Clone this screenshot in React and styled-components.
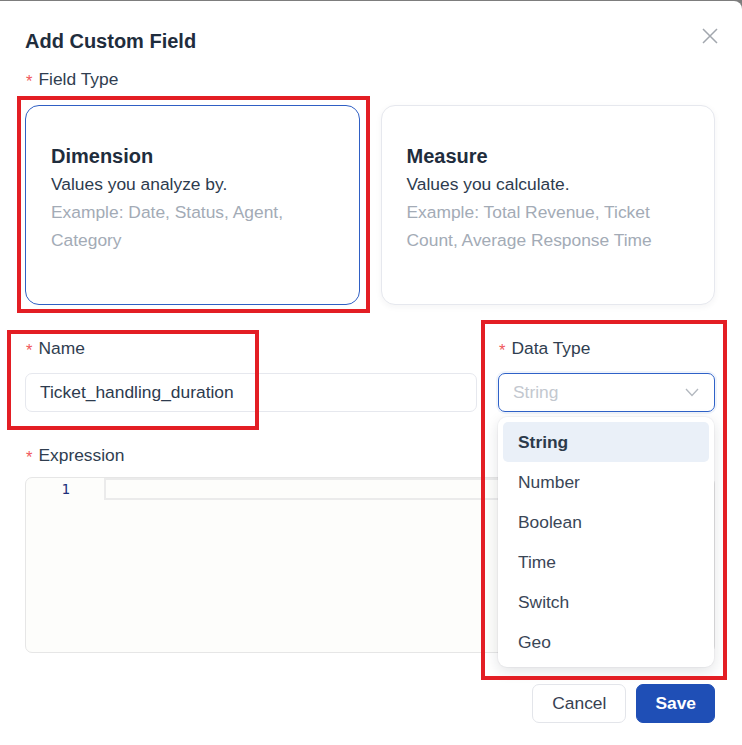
import styled, { createGlobalStyle } from "styled-components";

const GlobalStyle = createGlobalStyle`
  html, body {
    margin: 0;
    padding: 0;
    background: #7d7d7d;
  }
  body {
    font-family: "Liberation Sans", Arial, sans-serif;
    color: #2d3b4e;
  }
`;

const Modal = styled.div`
  position: relative;
  box-sizing: border-box;
  width: 742px;
  height: 744px;
  margin-top: 1px;
  background: #fff;
  border-top-right-radius: 8px;
  padding: 26px 27px 0 25px;
`;

const Header = styled.div`
  display: flex;
  justify-content: space-between;
  align-items: flex-start;
`;

const Title = styled.h2`
  margin: 0;
  font-size: 20px;
  line-height: 28px;
  font-weight: 700;
  color: #1f2d3d;
`;

const CloseButton = styled.button`
  border: 0;
  padding: 0;
  margin: 1px -3px 0 0;
  background: none;
  width: 16px;
  height: 16px;
  display: flex;
  cursor: pointer;
`;

const Label = styled.div`
  display: flex;
  align-items: center;
  height: 24px;
  font-size: 17.4px;
  line-height: 24px;
  color: #303e50;
  margin-top: ${(p) => p.top || 0}px;
  margin-bottom: ${(p) => p.bottom || 13}px;
`;

const Star = styled.span`
  color: #f0585c;
  font-size: 16.5px;
  line-height: 1;
  margin: 4px 6px 0 1px;
`;

const CardGrid = styled.div`
  display: grid;
  grid-template-columns: 1fr 1fr;
  gap: 21px;
`;

const Card = styled.div`
  box-sizing: border-box;
  height: 200px;
  padding: 36px 25px 0 25px;
  border-radius: 14px;
  border: 1px solid ${(p) => (p.selected ? "#2f5fc4" : "#e6e8ee")};
  box-shadow: ${(p) => (p.selected ? "none" : "0 2px 6px rgba(30, 40, 60, 0.05)")};
  background: #fff;
`;

const CardTitle = styled.div`
  font-size: 20px;
  font-weight: 700;
  line-height: 28px;
  color: #1f2d3d;
`;

const CardText = styled.div`
  font-size: 17.4px;
  line-height: 28px;
  color: ${(p) => (p.muted ? "#a3abb6" : "#2d3b4e")};
`;

const Row = styled.div`
  display: grid;
  grid-template-columns: 1fr 217px;
  gap: 21px;
  margin-top: 31px;
`;

const Field = styled.div`
  position: relative;
`;

const Input = styled.div`
  box-sizing: border-box;
  height: 39px;
  border: 1px solid #e6e8ee;
  border-radius: 7px;
  padding: 0 14px;
  display: flex;
  align-items: center;
  font-size: 17.4px;
  color: #2d3b4e;
`;

const Select = styled(Input)`
  border-color: #2f62c8;
  box-shadow: 0 0 0 2px rgba(47, 98, 200, 0.07);
  justify-content: space-between;
  color: #c3c8cf;
`;

const Dropdown = styled.ul`
  position: absolute;
  z-index: 5;
  top: calc(100% + 5px);
  left: 0;
  right: 1px;
  margin: 0;
  padding: 5px;
  list-style: none;
  background: #fff;
  border-radius: 9px;
  box-shadow: 0 4px 14px rgba(20, 30, 50, 0.13), 0 0 0 1px rgba(20, 30, 50, 0.03);
`;

const Option = styled.li`
  height: 40px;
  display: flex;
  align-items: center;
  padding-left: 15px;
  border-radius: 5px;
  font-size: 17.4px;
  font-weight: ${(p) => (p.active ? 700 : 400)};
  color: ${(p) => (p.active ? "#2c3a4a" : "#3a4656")};
  background: ${(p) => (p.active ? "#eaf0f8" : "transparent")};
`;

const Editor = styled.div`
  box-sizing: border-box;
  height: 176px;
  display: flex;
  align-items: flex-start;
  border: 1px solid #e6e6e6;
  border-radius: 7px;
  background: #fdfdfb;
  overflow: hidden;
`;

const Gutter = styled.div`
  width: 44px;
  padding-right: 34px;
  text-align: right;
  font-family: "DejaVu Sans Mono", "Liberation Mono", monospace;
  font-size: 14px;
  line-height: 22px;
  color: #1e2f7a;
`;

const ActiveLine = styled.div`
  flex: 1;
  box-sizing: border-box;
  height: 22px;
  border: 2px solid #ebebeb;
  border-right: 0;
`;

const Footer = styled.div`
  display: flex;
  justify-content: flex-end;
  gap: 10px;
  margin-top: 31px;
`;

const Button = styled.button`
  box-sizing: border-box;
  height: 39px;
  padding: 0 ${(p) => (p.primary ? 18 : 19)}px;
  border-radius: 7px;
  font-family: inherit;
  font-size: 17.4px;
  font-weight: ${(p) => (p.primary ? 700 : 400)};
  color: ${(p) => (p.primary ? "#fff" : "#374151")};
  background: ${(p) => (p.primary ? "#1f4fb6" : "#fff")};
  border: 1px solid ${(p) => (p.primary ? "#1f4fb6" : "#e3e5ea")};
  cursor: pointer;
`;

const Highlight = styled.div`
  position: absolute;
  z-index: 10;
  box-sizing: border-box;
  border: 4px solid #e31e24;
  pointer-events: none;
`;

const dataTypes = ["String", "Number", "Boolean", "Time", "Switch", "Geo"];

function CloseIcon() {
  return (
    <svg width="16" height="16" viewBox="0 0 16 16">
      <path d="M1 1L15 15M15 1L1 15" stroke="#a2a7ae" strokeWidth="1.5" />
    </svg>
  );
}

function Chevron() {
  return (
    <svg width="14" height="9" viewBox="0 0 14 9" style={{ marginRight: 1 }}>
      <path d="M1 1L7 7.5L13 1" fill="none" stroke="#b3b8bf" strokeWidth="1.3" />
    </svg>
  );
}

export default function App() {
  return (
    <>
      <GlobalStyle />
      <Modal>
        <Header>
          <Title>Add Custom Field</Title>
          <CloseButton>
            <CloseIcon />
          </CloseButton>
        </Header>

        <Label top={12} bottom={14}>
          <Star>*</Star>Field Type
        </Label>
        <CardGrid>
          <Card selected>
            <CardTitle>Dimension</CardTitle>
            <CardText>Values you analyze by.</CardText>
            <CardText muted>Example: Date, Status, Agent, Category</CardText>
          </Card>
          <Card>
            <CardTitle>Measure</CardTitle>
            <CardText>Values you calculate.</CardText>
            <CardText muted>
              Example: Total Revenue, Ticket Count, Average Response Time
            </CardText>
          </Card>
        </CardGrid>

        <Row>
          <Field>
            <Label>
              <Star>*</Star>Name
            </Label>
            <Input>Ticket_handling_duration</Input>
          </Field>
          <Field>
            <Label>
              <Star>*</Star>Data Type
            </Label>
            <Field>
              <Select>
                String
                <Chevron />
              </Select>
              <Dropdown>
                {dataTypes.map((t, i) => (
                  <Option key={t} active={i === 0}>
                    {t}
                  </Option>
                ))}
              </Dropdown>
            </Field>
          </Field>
        </Row>

        <Label top={31} bottom={10}>
          <Star>*</Star>Expression
        </Label>
        <Editor>
          <Gutter>1</Gutter>
          <ActiveLine />
        </Editor>

        <Footer>
          <Button>Cancel</Button>
          <Button primary>Save</Button>
        </Footer>

        <Highlight style={{ left: 17, top: 95, width: 353, height: 217 }} />
        <Highlight style={{ left: 7, top: 329, width: 252, height: 100 }} />
        <Highlight style={{ left: 481, top: 319, width: 246, height: 360 }} />
      </Modal>
    </>
  );
}
